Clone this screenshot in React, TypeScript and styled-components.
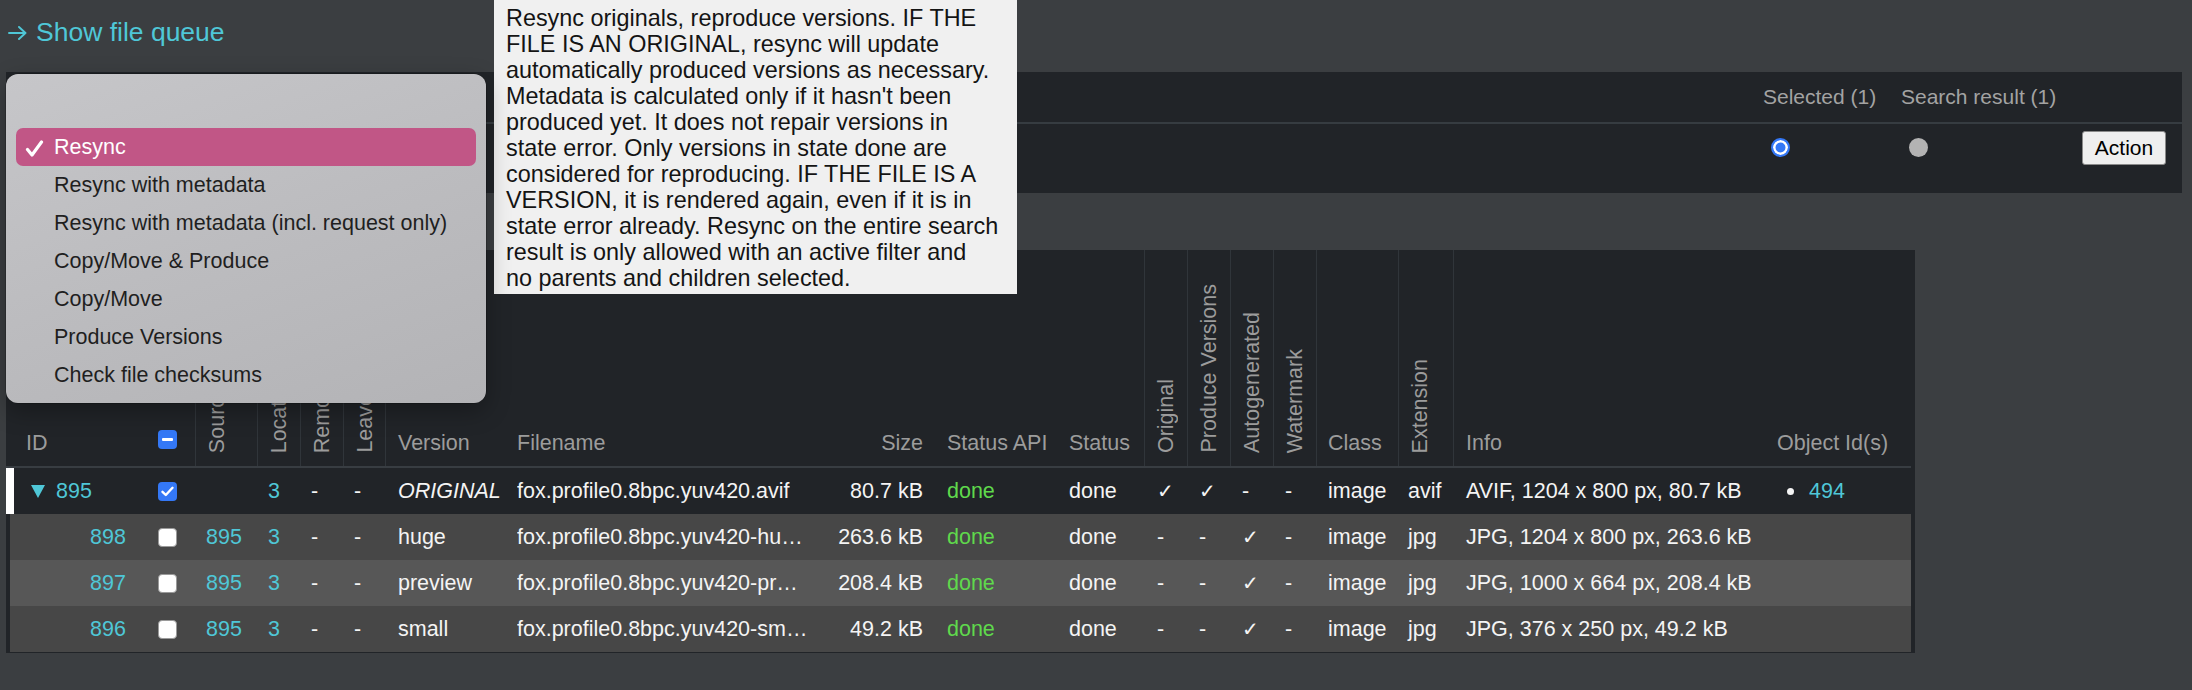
import React from "react";
import styled, { createGlobalStyle, css } from "styled-components";

const GlobalStyle = createGlobalStyle`
  html, body {
    margin: 0;
    padding: 0;
    background: #3b3e41;
  }
  body {
    font-family: "Liberation Sans", Arial, sans-serif;
    color: #f2f2f2;
    -webkit-font-smoothing: antialiased;
  }
`;

const CYAN = "#4fc7d7";
const GRID = "140px 49px 62px 43px 43px 42px 120px 324px 106px 122px 87px 43px 43px 43px 43px 82px 55px 312px 146px";

const Page = styled.div`
  position: relative;
  min-height: 690px;
  box-sizing: border-box;
  padding: 0 10px 0 6px;
`;

const QueueLink = styled.a`
  display: flex;
  align-items: center;
  gap: 9px;
  height: 72px;
  box-sizing: border-box;
  padding: 0 0 8px 2px;
  color: ${CYAN};
  font-size: 26.5px;
  text-decoration: none;
`;

const ArrowIcon = styled.svg`
  width: 19px;
  height: 14px;
  margin-top: 2px;
`;

const ActionPanel = styled.section`
  background: #212428;
  display: flex;
  flex-direction: column;
`;

const PanelRow = styled.div<{ $head?: boolean }>`
  display: grid;
  grid-template-columns: 1fr 138px 165px 116px;
  ${(p) =>
    p.$head
      ? css`
          height: 50px;
          align-items: center;
          border-bottom: 2px solid #363c41;
        `
      : css`
          height: 69px;
          align-items: start;
          padding-top: 7px;
          box-sizing: border-box;
        `}
`;

const PanelLabel = styled.span`
  color: #a3a3a3;
  font-size: 21px;
  white-space: nowrap;
`;

const Radio = styled.span<{ $checked?: boolean }>`
  display: block;
  width: 19px;
  height: 19px;
  margin: 7px 0 0 8px;
  border-radius: 50%;
  box-sizing: border-box;
  ${(p) =>
    p.$checked
      ? css`
          background: #3478f6;
          border: 2px solid #3478f6;
          box-shadow: inset 0 0 0 2.5px #ffffff;
        `
      : css`
          background: #b3b3b3;
        `}
`;

const ActionButton = styled.button`
  justify-self: end;
  margin-right: 16px;
  width: 84px;
  height: 34px;
  background: #efefef;
  border: 1px solid #8a8a8a;
  border-radius: 3px;
  color: #000;
  font-family: "Liberation Sans", Arial, sans-serif;
  font-size: 21px;
  padding: 0;
`;

const Table = styled.div`
  margin-top: 57px;
  width: 1909px;
  background: #212428;
  padding: 0 4px 1px 0;
  box-sizing: border-box;
`;

const HeadRow = styled.div`
  display: grid;
  grid-template-columns: ${GRID};
  height: 218px;
  border-bottom: 2px solid #383d42;
  box-sizing: border-box;
`;

const HeadCell = styled.div<{ $sep?: boolean; $right?: boolean; $pl?: number; $pb?: number }>`
  display: flex;
  align-items: flex-end;
  justify-content: ${(p) => (p.$right ? "flex-end" : "flex-start")};
  padding: 0 12px ${(p) => (p.$pb ?? 10)}px ${(p) => (p.$pl ?? 12)}px;
  color: #9c9c9c;
  font-size: 21.5px;
  line-height: 26px;
  white-space: nowrap;
  border-left: ${(p) => (p.$sep ? "1px solid #30353a" : "none")};
  min-width: 0;
`;

const RotHeadCell = styled.div`
  display: flex;
  align-items: flex-end;
  padding: 0 0 13px 9px;
  border-left: 1px solid #30353a;
  color: #9c9c9c;
  font-size: 21.5px;
  overflow: hidden;
`;

const RotText = styled.span`
  writing-mode: vertical-rl;
  transform: rotate(180deg);
  line-height: 24px;
  white-space: nowrap;
`;

const DataRow = styled.div<{ $tone: "sel" | "a" | "b" }>`
  display: grid;
  grid-template-columns: ${GRID};
  height: 46px;
  align-items: center;
  font-size: 21.5px;
  color: #f4f4f4;
  background: ${(p) => (p.$tone === "sel" ? "#212428" : p.$tone === "a" ? "#474747" : "#575757")};
  box-shadow: ${(p) => (p.$tone === "sel" ? "inset 8px 0 0 #ffffff" : "inset 4px 0 0 #212428")};
`;

const Cell = styled.div<{ $pl?: number; $right?: boolean; $color?: string; $italic?: boolean }>`
  display: flex;
  align-items: center;
  justify-content: ${(p) => (p.$right ? "flex-end" : "flex-start")};
  padding: 0 12px 0 ${(p) => (p.$pl ?? 12)}px;
  color: ${(p) => p.$color ?? "inherit"};
  font-style: ${(p) => (p.$italic ? "italic" : "normal")};
  white-space: nowrap;
  min-width: 0;
`;

const FileName = styled.span`
  display: block;
  max-width: 291.5px;
  overflow: hidden;
  text-overflow: ellipsis;
  white-space: nowrap;
`;

const Tick = styled.span`
  font-family: "DejaVu Sans", sans-serif;
  font-size: 20px;
  font-weight: 300;
`;

const IdLink = styled.span`
  color: ${CYAN};
`;

const Caret = styled.svg`
  width: 14px;
  height: 13px;
  margin-right: 11px;
`;

const Box = styled.span<{ $state: "on" | "off" | "mixed" }>`
  display: inline-flex;
  align-items: center;
  justify-content: center;
  width: 19px;
  height: 19px;
  border-radius: 4px;
  box-sizing: border-box;
  ${(p) =>
    p.$state === "off"
      ? css`
          background: #ffffff;
          border: 1px solid #9a9a9a;
        `
      : css`
          background: #3478f6;
        `}
`;

const Bullet = styled.span`
  display: inline-block;
  width: 7px;
  height: 7px;
  border-radius: 50%;
  background: #f4f4f4;
  margin: 0 15px 0 10px;
`;

const Menu = styled.div`
  position: absolute;
  left: 6px;
  top: 74px;
  width: 480px;
  height: 329px;
  box-sizing: border-box;
  padding: 16px 10px 0;
  border-radius: 12px;
  background: linear-gradient(160deg, #c6c6c9 0%, #bcbcbf 50%, #b3b3b6 100%);
  box-shadow: 0 0 0 0.5px rgba(0, 0, 0, 0.35), 0 8px 24px rgba(0, 0, 0, 0.3);
  font-size: 21.5px;
`;

const MenuItem = styled.div<{ $active?: boolean }>`
  position: relative;
  height: 38px;
  display: flex;
  align-items: center;
  padding-left: 38px;
  border-radius: 7px;
  color: ${(p) => (p.$active ? "#ffffff" : "#1f1f1f")};
  background: ${(p) => (p.$active ? "#c15686" : "transparent")};
  white-space: nowrap;
`;

const MenuCheck = styled.svg`
  position: absolute;
  left: 9px;
  top: 12px;
  width: 19px;
  height: 17px;
`;

const Tooltip = styled.div`
  position: absolute;
  left: 494px;
  top: 0;
  width: 523px;
  height: 294px;
  box-sizing: border-box;
  padding: 5px 12px 0;
  background: #f0f0f0;
  color: #141414;
  font-size: 23.4px;
  line-height: 26px;
  white-space: pre-line;
`;

type Row = {
  id: string;
  parent?: boolean;
  checked: boolean;
  source: string;
  version: string;
  file: string;
  size: string;
  original: boolean;
  produce: boolean;
  auto: boolean;
  ext: string;
  info: string;
  objects: string[];
  tone: "sel" | "a" | "b";
};

const rows: Row[] = [
  { id: "895", parent: true, checked: true, source: "", version: "ORIGINAL", file: "fox.profile0.8bpc.yuv420.avif", size: "80.7 kB", original: true, produce: true, auto: false, ext: "avif", info: "AVIF, 1204 x 800 px, 80.7 kB", objects: ["494"], tone: "sel" },
  { id: "898", checked: false, source: "895", version: "huge", file: "fox.profile0.8bpc.yuv420-huge.jpg", size: "263.6 kB", original: false, produce: false, auto: true, ext: "jpg", info: "JPG, 1204 x 800 px, 263.6 kB", objects: [], tone: "a" },
  { id: "897", checked: false, source: "895", version: "preview", file: "fox.profile0.8bpc.yuv420-preview.jpg", size: "208.4 kB", original: false, produce: false, auto: true, ext: "jpg", info: "JPG, 1000 x 664 px, 208.4 kB", objects: [], tone: "b" },
  { id: "896", checked: false, source: "895", version: "small", file: "fox.profile0.8bpc.yuv420-small.jpg", size: "49.2 kB", original: false, produce: false, auto: true, ext: "jpg", info: "JPG, 376 x 250 px, 49.2 kB", objects: [], tone: "a" },
];

const menuOptions = [
  "",
  "Resync",
  "Resync with metadata",
  "Resync with metadata (incl. request only)",
  "Copy/Move & Produce",
  "Copy/Move",
  "Produce Versions",
  "Check file checksums",
];

const tooltipText = [
  "Resync originals, reproduce versions. IF THE",
  "FILE IS AN ORIGINAL, resync will update",
  "automatically produced versions as necessary.",
  "Metadata is calculated only if it hasn't been",
  "produced yet. It does not repair versions in",
  "state error. Only versions in state done are",
  "considered for reproducing. IF THE FILE IS A",
  "VERSION, it is rendered again, even if it is in",
  "state error already. Resync on the entire search",
  "result is only allowed with an active filter and",
  "no parents and children selected.",
].join("\n");

function CheckBox({ state }: { state: "on" | "off" | "mixed" }) {
  return (
    <Box $state={state}>
      {state === "on" && (
        <svg width="13" height="11" viewBox="0 0 13 11">
          <polyline points="1.5,5.8 4.8,9 11.5,1.8" fill="none" stroke="#fff" strokeWidth="2.4" strokeLinecap="round" strokeLinejoin="round" />
        </svg>
      )}
      {state === "mixed" && (
        <svg width="11" height="3" viewBox="0 0 11 3">
          <rect x="0" y="0" width="11" height="3" rx="1" fill="#fff" />
        </svg>
      )}
    </Box>
  );
}

const mark = (v: boolean) => (v ? <Tick>✓</Tick> : "-");

export default function App() {
  return (
    <>
      <GlobalStyle />
      <Page>
        <QueueLink href="#">
          <ArrowIcon viewBox="0 0 19 14">
            <path d="M1 7 H17.5 M11 1 L17.5 7 L11 13" fill="none" stroke={CYAN} strokeWidth="1.9" strokeLinecap="round" strokeLinejoin="round" />
          </ArrowIcon>
          <span>Show file queue</span>
        </QueueLink>

        <ActionPanel>
          <PanelRow $head>
            <span />
            <PanelLabel>Selected (1)</PanelLabel>
            <PanelLabel>Search result (1)</PanelLabel>
            <span />
          </PanelRow>
          <PanelRow>
            <span />
            <Radio $checked />
            <Radio />
            <ActionButton>Action</ActionButton>
          </PanelRow>
        </ActionPanel>

        <Table>
          <HeadRow>
            <HeadCell $pl={20}>ID</HeadCell>
            <HeadCell $pl={12} $pb={17}>
              <CheckBox state="mixed" />
            </HeadCell>
            <RotHeadCell><RotText>Source</RotText></RotHeadCell>
            <RotHeadCell><RotText>Location</RotText></RotHeadCell>
            <RotHeadCell><RotText>Remote</RotText></RotHeadCell>
            <RotHeadCell><RotText>Leave</RotText></RotHeadCell>
            <HeadCell $sep $pl={12}>Version</HeadCell>
            <HeadCell>Filename</HeadCell>
            <HeadCell $right>Size</HeadCell>
            <HeadCell>Status API</HeadCell>
            <HeadCell>Status</HeadCell>
            <RotHeadCell><RotText>Original</RotText></RotHeadCell>
            <RotHeadCell><RotText>Produce Versions</RotText></RotHeadCell>
            <RotHeadCell><RotText>Autogenerated</RotText></RotHeadCell>
            <RotHeadCell><RotText>Watermark</RotText></RotHeadCell>
            <HeadCell $sep $pl={11}>Class</HeadCell>
            <RotHeadCell><RotText>Extension</RotText></RotHeadCell>
            <HeadCell $sep $pl={12}>Info</HeadCell>
            <HeadCell>Object Id(s)</HeadCell>
          </HeadRow>

          {rows.map((r) => (
            <DataRow key={r.id} $tone={r.tone}>
              <Cell $pl={r.parent ? 25 : 84}>
                {r.parent && (
                  <Caret viewBox="0 0 14 13">
                    <polygon points="0,0 14,0 7,13" fill={CYAN} />
                  </Caret>
                )}
                <IdLink>{r.id}</IdLink>
              </Cell>
              <Cell>
                <CheckBox state={r.checked ? "on" : "off"} />
              </Cell>
              <Cell $pl={11} $color={CYAN}>{r.source}</Cell>
              <Cell $pl={11} $color={CYAN}>3</Cell>
              <Cell $pl={11}>-</Cell>
              <Cell $pl={11}>-</Cell>
              <Cell $pl={13} $italic={r.parent}>{r.version}</Cell>
              <Cell>
                <FileName>{r.file}</FileName>
              </Cell>
              <Cell $right>{r.size}</Cell>
              <Cell $color="#5fd94c">done</Cell>
              <Cell>done</Cell>
              <Cell $pl={13}>{mark(r.original)}</Cell>
              <Cell $pl={12}>{mark(r.produce)}</Cell>
              <Cell $pl={12}>{mark(r.auto)}</Cell>
              <Cell $pl={12}>-</Cell>
              <Cell $pl={12}>image</Cell>
              <Cell $pl={10}>{r.ext}</Cell>
              <Cell $pl={13}>{r.info}</Cell>
              <Cell $pl={12}>
                {r.objects.map((o) => (
                  <React.Fragment key={o}>
                    <Bullet />
                    <IdLink>{o}</IdLink>
                  </React.Fragment>
                ))}
              </Cell>
            </DataRow>
          ))}
        </Table>

        <Tooltip>{tooltipText}</Tooltip>

        <Menu>
          {menuOptions.map((o, i) => (
            <MenuItem key={i} $active={o === "Resync"}>
              {o === "Resync" && (
                <MenuCheck viewBox="0 0 19 17">
                  <polyline points="2.5,9.5 7,15 16.5,2" fill="none" stroke="#fff" strokeWidth="3.2" strokeLinecap="round" strokeLinejoin="round" />
                </MenuCheck>
              )}
              {o}
            </MenuItem>
          ))}
        </Menu>
      </Page>
    </>
  );
}
